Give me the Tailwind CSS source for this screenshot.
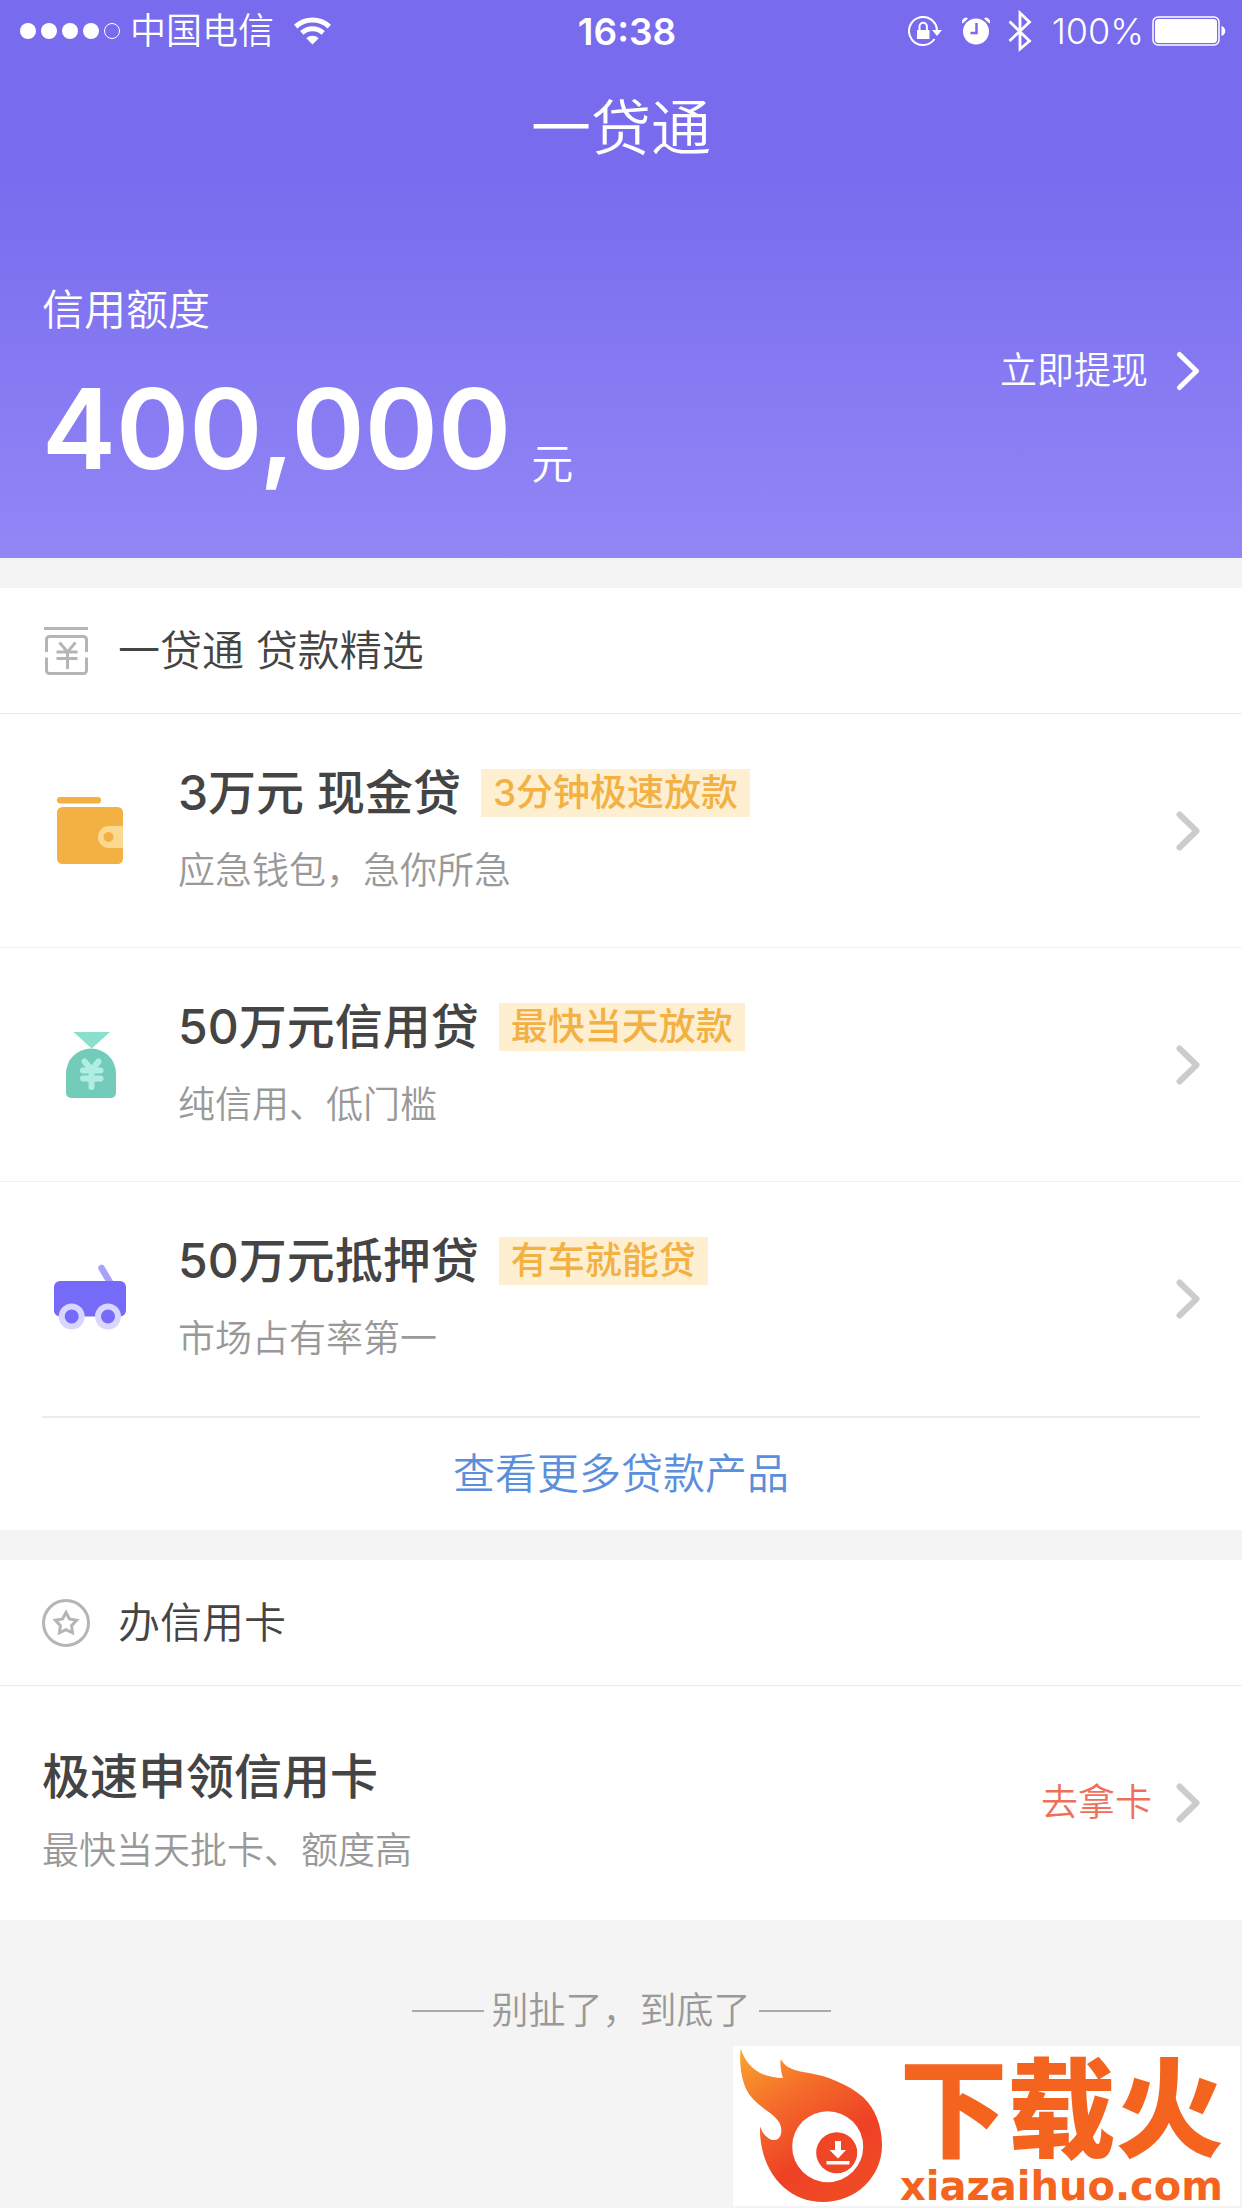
<!DOCTYPE html>
<html lang="zh-CN">
<head>
    <meta charset="UTF-8">
    <meta name="viewport" content="width=device-width, initial-scale=1.0">
    <title>一贷通</title>
    <script src="https://cdn.jsdelivr.net/npm/@tailwindcss/browser@4"></script>
    <style>body { font-family: 'Inter', 'Noto Sans CJK SC', sans-serif; }</style>
</head>
<body class="relative min-h-screen bg-[#f4f4f4] text-[#444444]">

    <!-- Header -->
    <header class="bg-linear-to-b from-[#786bee] from-30% to-[#9386f6] text-white">
        <div class="flex items-center h-[62px] pl-5 pr-4">
            <div class="flex-1 flex items-center">
                <div class="flex gap-[5px] mr-2.5">
                    <span class="size-4 rounded-full bg-white"></span>
                    <span class="size-4 rounded-full bg-white"></span>
                    <span class="size-4 rounded-full bg-white"></span>
                    <span class="size-4 rounded-full bg-white"></span>
                    <span class="size-4 rounded-full border border-white"></span>
                </div>
                <span class="text-[36px] leading-none font-[350]">中国电信</span>
                <svg class="ml-5 w-[37px] h-7" viewBox="0 0 37 28" fill="none" stroke="#fff" stroke-width="5">
                    <path d="M1.700 9.600a24.500 24.500 0 0 1 33.600 0"/>
                    <path d="M7.800 15.800a16 16 0 0 1 21.400 0"/>
                    <path d="M18.500 27.500l-6.200-6.300a9 9 0 0 1 12.400 0z" fill="#fff" stroke="none"/>
                </svg>
            </div>
            <time class="pl-2 text-[37px] leading-none font-semibold">16:38</time>
            <div class="flex-1 flex items-center justify-end">
                <svg class="w-[34px] h-[30px]" viewBox="0 0 34 30" fill="none" stroke="#fff" stroke-width="2">
                    <path d="M26.500 23A14 14 0 1 1 29 14.500"/>
                    <path d="M24 14h10l-5 6z" fill="#fff" stroke="none"/>
                    <path d="M9 14h12.500v9H9z" fill="#fff" stroke="none"/>
                    <path d="M11.500 14v-3.500a3.700 3.700 0 0 1 7.400 0V14"/>
                </svg>
                <svg class="ml-5 w-7 h-7" viewBox="0 0 28 28">
                    <circle cx="14" cy="14.500" r="13" fill="#fff"/>
                    <path d="M5.500 1.500C2 0 0 3 .5 6zM22.500 1.500C26 0 28 3 27.500 6z" fill="#fff" stroke="#fff" stroke-width="1"/>
                    <path d="M14.500 6v10H8.500" fill="none" stroke="#786bee" stroke-width="2.500"/>
                </svg>
                <svg class="ml-[18px] w-6 h-[42px]" viewBox="0 0 24 42" fill="none" stroke="#fff" stroke-width="2.800">
                    <path d="M1.500 11.500l20 19.500L12 39V3l9.500 9L1.500 31"/>
                </svg>
                <span class="ml-5 text-[36px] leading-none font-light">100%</span>
                <svg class="ml-2 w-[74px] h-[30px]" viewBox="0 0 74 30" fill="#fff">
                    <rect x="1" y="1" width="66" height="28" rx="5" fill="none" stroke="#fff" stroke-width="1.500"/>
                    <rect x="3" y="3" width="62" height="24" rx="3.500"/>
                    <path d="M69.500 10c5 1.500 5 8.500 0 10z"/>
                </svg>
            </div>
        </div>
        <h1 class="text-center text-[60px] leading-[132px] font-[350]">一贷通</h1>

        <div class="flex items-center justify-between px-[42px] pt-[86px] pb-[52px]">
            <div>
                <p class="text-[42px] leading-[60px] font-[350]">信用额度</p>
                <p class="flex items-end mt-6 pb-3">
                    <strong class="text-[111px] leading-[130px] font-semibold">400,000</strong>
                    <span class="ml-5 text-[42px] leading-[60px] font-[350]">元</span>
                </p>
            </div>
            <a href="#" class="flex items-center pb-11 text-[37px] leading-[48px] font-[350]">
                立即提现
                <svg class="ml-7 w-6 h-10" viewBox="0 0 24 40" fill="none" stroke="#fff" stroke-width="5" stroke-linecap="round" stroke-linejoin="round"><path d="M3.500 3.500L20.500 20l-17 16.500"/></svg>
            </a>
        </div>
    </header>

    <!-- Loans -->
    <section class="mt-[30px] bg-white">
        <h2 class="flex items-center gap-7 h-[126px] px-[42px] border-b border-[#ebebeb] text-[42px] font-[350]">
            <svg class="size-12" viewBox="0 0 48 48" fill="none" stroke="#b5b5b5" stroke-width="3">
                <path d="M2 1.500h44"/>
                <path d="M4.500 25V12.500a3 3 0 0 1 3-3h34a3 3 0 0 1 3 3V25M4.500 30.500v13a3 3 0 0 0 3 3h34a3 3 0 0 0 3-3v-13"/>
                <path d="M17.500 15.500l8 9.500 8-9.500M14.500 25h21M14.500 31.500h21M25.500 25v17"/>
            </svg>
            一贷通 贷款精选
        </h2>

        <a href="#" class="flex items-center h-[234px] px-[42px] border-b border-[#f2f2f2]">
            <svg class="size-24" viewBox="0 0 96 96">
                <rect x="15" y="14" width="44" height="6.500" rx="3.200" fill="#f3b043"/>
                <rect x="15" y="24" width="66" height="57" rx="5.500" fill="#f3b043"/>
                <path d="M81 43H67a11 11 0 0 0 0 22h14z" fill="#fada90"/>
                <circle cx="66.500" cy="54" r="5" fill="#f3b043"/>
            </svg>
            <div class="flex-1 ml-10">
                <div class="flex items-center gap-5">
                    <h3 class="text-[48px] leading-[60px] font-medium">3万元 现金贷</h3>
                    <span class="px-3 bg-[#fdefd0] text-[37px] leading-[48px] font-medium text-[#f3b043]">3分钟极速放款</span>
                </div>
                <p class="mt-5 text-[37px] leading-[56px] font-[350] text-[#999999]">应急钱包，急你所急</p>
            </div>
            <svg class="w-6 h-10" viewBox="0 0 24 40" fill="none" stroke="#cccccc" stroke-width="6" stroke-linecap="round" stroke-linejoin="round"><path d="M3.500 3.500L20.500 20l-17 16.500"/></svg>
        </a>

        <a href="#" class="flex items-center h-[234px] px-[42px] border-b border-[#f2f2f2]">
            <svg class="size-24" viewBox="0 0 96 96">
                <path d="M31.500 15H68L49.700 31.500z" fill="#88e0cd"/>
                <path d="M24 56.500a25 25 0 0 1 50 0V76a5 5 0 0 1-5 5H29a5 5 0 0 1-5-5z" fill="#73ccb9"/>
                <path d="M42.500 44.500l7 8.500 7-8.500M41 53.500h17.500M41 61.500h17.500M49.500 54v16" fill="none" stroke="#b2ede1" stroke-width="6" stroke-linecap="round"/>
            </svg>
            <div class="flex-1 ml-10">
                <div class="flex items-center gap-5">
                    <h3 class="text-[48px] leading-[60px] font-medium">50万元信用贷</h3>
                    <span class="px-3 bg-[#fdefd0] text-[37px] leading-[48px] font-medium text-[#f3b043]">最快当天放款</span>
                </div>
                <p class="mt-5 text-[37px] leading-[56px] font-[350] text-[#999999]">纯信用、低门槛</p>
            </div>
            <svg class="w-6 h-10" viewBox="0 0 24 40" fill="none" stroke="#cccccc" stroke-width="6" stroke-linecap="round" stroke-linejoin="round"><path d="M3.500 3.500L20.500 20l-17 16.500"/></svg>
        </a>

        <a href="#" class="flex items-center h-[234px] px-[42px]">
            <svg class="size-24" viewBox="0 0 96 96">
                <path d="M59.500 17l9.500 16" stroke="#a8a1fa" stroke-width="6.500" stroke-linecap="round"/>
                <rect x="12" y="30" width="72" height="35.500" rx="6" fill="#766af8"/>
                <circle cx="29.700" cy="65.500" r="10" fill="#766af8" stroke="#d9d6fd" stroke-width="6"/>
                <circle cx="66" cy="65.500" r="10" fill="#766af8" stroke="#d9d6fd" stroke-width="6"/>
            </svg>
            <div class="flex-1 ml-10">
                <div class="flex items-center gap-5">
                    <h3 class="text-[48px] leading-[60px] font-medium">50万元抵押贷</h3>
                    <span class="px-3 bg-[#fdefd0] text-[37px] leading-[48px] font-medium text-[#f3b043]">有车就能贷</span>
                </div>
                <p class="mt-5 text-[37px] leading-[56px] font-[350] text-[#999999]">市场占有率第一</p>
            </div>
            <svg class="w-6 h-10" viewBox="0 0 24 40" fill="none" stroke="#cccccc" stroke-width="6" stroke-linecap="round" stroke-linejoin="round"><path d="M3.500 3.500L20.500 20l-17 16.500"/></svg>
        </a>

        <div class="mx-[42px] border-t-2 border-[#ececec]">
            <a href="#" class="block text-center text-[42px] leading-[112px] font-[350] text-[#5b8edb]">查看更多贷款产品</a>
        </div>
    </section>

    <!-- Credit card -->
    <section class="mt-[30px] bg-white">
        <h2 class="flex items-center gap-7 h-[126px] px-[42px] border-b border-[#ebebeb] text-[42px] font-[350]">
            <svg class="size-12" viewBox="0 0 48 48" fill="none" stroke="#b5b5b5" stroke-width="3">
                <circle cx="24" cy="24" r="22.500"/>
                <path d="M24 13.500l3.400 6.500 7.200 1.300-5 5.300.9 7.200-6.500-3.100-6.500 3.100.9-7.200-5-5.300 7.200-1.300z"/>
            </svg>
            办信用卡
        </h2>
        <a href="#" class="flex items-center h-[234px] px-[42px]">
            <div class="flex-1 pt-5">
                <h3 class="text-[48px] leading-[60px] font-medium">极速申领信用卡</h3>
                <p class="mt-4 text-[37px] leading-[56px] font-[350] text-[#999999]">最快当天批卡、额度高</p>
            </div>
            <span class="text-[37px] leading-[48px] font-[350] text-[#ef6f5a]">去拿卡</span>
            <svg class="ml-6 w-6 h-10" viewBox="0 0 24 40" fill="none" stroke="#cccccc" stroke-width="6" stroke-linecap="round" stroke-linejoin="round"><path d="M3.500 3.500L20.500 20l-17 16.500"/></svg>
        </a>
    </section>

    <footer class="flex items-center justify-center gap-2 pt-16 text-[37px] leading-[54px] font-[350] text-[#999999]">
        <span class="w-[72px] h-0.5 bg-[#aaaaaa]"></span>
        别扯了，到底了
        <span class="w-[72px] h-0.5 bg-[#aaaaaa]"></span>
    </footer>

    <!-- Site badge -->
    <a href="#" class="absolute right-0.5 bottom-0.5 flex w-[507px] h-40 bg-white text-[#f4641e]">
        <svg class="w-[150px] h-40 shrink-0" viewBox="0 0 150 160">
            <defs>
                <linearGradient id="flame" x1="0" y1="0" x2=".6" y2="1">
                    <stop offset="0" stop-color="#fba62c"/>
                    <stop offset=".4" stop-color="#f4692a"/>
                    <stop offset=".75" stop-color="#ee4125"/>
                    <stop offset="1" stop-color="#f04a25"/>
                </linearGradient>
            </defs>
            <path fill="url(#flame)" d="M7.700 2.500C13 20 27 32 50 32 48 26 47 20 47.700 13.300 54 24 64 25 76 27 95 30 116 39 130 51 142 62 149 80 149 99 149 131 123 156 90 156 54 156 26 125 27 80.500 30 89 36 94.500 42 94 49 93 50 83 46 76 40 66 26 62 16 48 8 36 6 16 7.700 2.500z"/>
            <circle cx="94.700" cy="100.700" r="35.500" fill="#fff"/>
            <circle cx="103.700" cy="106.700" r="20.500" fill="#ee4627"/>
            <path fill="#fff" d="M102 95h6v9h5l-8 8.500-8.500-8.500H102zM93.500 115h23v3.500h-23z"/>
        </svg>
        <div class="flex-1 flex flex-col items-center justify-end">
            <span class="text-[108px] leading-[112px] font-black whitespace-nowrap">下载火</span>
            <span class="text-[40px] leading-[40px] font-bold font-['DejaVu_Sans']">xiazaihuo.com</span>
        </div>
    </a>

</body>
</html>
